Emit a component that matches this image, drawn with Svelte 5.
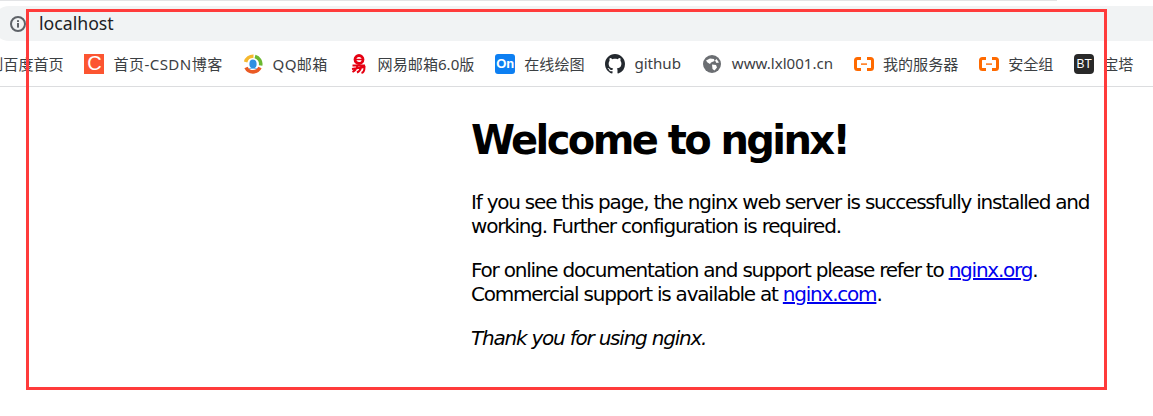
<script>
	const bookmarks = [
		{ id: 'baidu', label: '到百度首页' },
		{ id: 'csdn', label: '首页-CSDN博客' },
		{ id: 'qq', label: 'QQ邮箱' },
		{ id: 'netease', label: '网易邮箱6.0版' },
		{ id: 'on', label: '在线绘图' },
		{ id: 'github', label: 'github' },
		{ id: 'globe', label: 'www.lxl001.cn' },
		{ id: 'ali', label: '我的服务器' },
		{ id: 'ali', label: '安全组' },
		{ id: 'bt', label: '宝塔' }
	];
</script>

<div class="page">
	<div class="top-line"></div>
	<div class="address-bar">
		<svg class="info" viewBox="0 0 16 16" width="16" height="16">
			<circle cx="8" cy="8" r="7" fill="none" stroke="#5f6368" stroke-width="2" />
			<rect x="7" y="7" width="2" height="4.600" fill="#5f6368" />
			<rect x="7" y="4.200" width="2" height="1.800" fill="#5f6368" />
		</svg>
		<span class="url">localhost</span>
	</div>

	<div class="bookmarks">
		{#each bookmarks as b}
			<div class="bookmark" class:first={b.id === 'baidu'}>
				{#if b.id === 'csdn'}
					<span class="tile csdn">C</span>
				{:else if b.id === 'qq'}
					<svg viewBox="0 0 20 20" width="20" height="20">
						<path d="M2.600 8A7.800 7.800 0 0 1 10.500 2.200" fill="none" stroke="#f5b82e" stroke-width="3.600" />
						<path d="M12 2.400A7.800 7.800 0 0 1 17.600 11.500" fill="none" stroke="#6bb82f" stroke-width="3.600" />
						<path d="M17 13.500A7.800 7.800 0 0 1 3 13.500" fill="none" stroke="#ea5a24" stroke-width="3.600" />
						<ellipse cx="10" cy="10" rx="3.600" ry="4.400" fill="#2f8fe0" />
						<path d="M6 14.500h8" stroke="#7cc0f0" stroke-width="1" />
					</svg>
				{:else if b.id === 'netease'}
					<svg viewBox="0 0 20 20" width="20" height="20">
						<circle cx="10" cy="5.500" r="4" fill="none" stroke="#e60012" stroke-width="2.800" />
						<path d="M7 5.500h6" stroke="#e60012" stroke-width="1.400" />
						<path d="M3.500 11.500H16M3 15l12.500-2c0 3-1 5.500-3 6M8.500 11.500c-.5 3-2.500 5-5 6.500M12 13.500c-.5 2.500-2 4-4 5" fill="none" stroke="#e60012" stroke-width="2" />
					</svg>
				{:else if b.id === 'on'}
					<span class="tile on">On</span>
				{:else if b.id === 'github'}
					<svg viewBox="0 0 16 16" width="20" height="20">
						<path fill="#24292f" d="M8 0C3.580 0 0 3.580 0 8c0 3.540 2.290 6.530 5.470 7.590.4.070.55-.17.55-.38 0-.19-.01-.82-.01-1.490-2.010.37-2.530-.49-2.690-.94-.09-.23-.48-.94-.82-1.130-.28-.15-.68-.52-.01-.53.63-.01 1.080.58 1.230.82.720 1.210 1.870.87 2.330.66.070-.52.280-.87.510-1.070-1.780-.2-3.640-.89-3.640-3.950 0-.87.310-1.590.820-2.150-.08-.2-.36-1.020.08-2.120 0 0 .67-.21 2.200.82.640-.18 1.320-.27 2-.27s1.360.09 2 .27c1.530-1.040 2.200-.82 2.200-.82.440 1.100.160 1.920.080 2.120.510.560.820 1.270.820 2.150 0 3.070-1.870 3.750-3.650 3.950.290.250.540.730.540 1.480 0 1.070-.01 1.930-.01 2.200 0 .210.150.460.550.380A8.010 8.010 0 0 0 16 8c0-4.420-3.580-8-8-8z" />
					</svg>
				{:else if b.id === 'globe'}
					<svg class="globe" viewBox="0 0 18 18" width="18" height="18">
						<circle cx="9" cy="9" r="9" fill="#6b6e72" />
						<path fill="#fff" d="M3 5.500 7 3.500l4 .5 .5 2-3.500 1.500-1 1.500-2.500-1.500zM9 9.500l4 .5 1 2.500-2.500 3-2-1.500zM13.500 4l2.500 3.500-2.500.5-1.500-2.500z" />
					</svg>
				{:else if b.id === 'ali'}
					<svg viewBox="0 0 20 20" width="20" height="20">
						<path d="M7 4.500H3.500Q1.500 4.500 1.500 6.500v7q0 2 2 2H7M13 4.500h3.500q2 0 2 2v7q0 2-2 2H13" fill="none" stroke="#ff6a00" stroke-width="3" />
						<rect x="7" y="9.400" width="6" height="1.400" fill="#ff6a00" />
					</svg>
				{:else if b.id === 'bt'}
					<span class="tile bt">BT</span>
				{/if}
				<span class="label" class:wide={b.id === 'csdn' || b.id === 'qq'}>{b.label}</span>
			</div>
		{/each}
	</div>

	<main class="content">
		<h1>Welcome to nginx!</h1>
		<p>If you see this page, the nginx web server is successfully installed and working. Further configuration is required.</p>
		<p>For online documentation and support please refer to <a href="#org">nginx.org</a>.<br />Commercial support is available at <a href="#com">nginx.com</a>.</p>
		<p><em>Thank you for using nginx.</em></p>
	</main>

	<div class="annotation"></div>
</div>

<style>
	:global(body) {
		margin: 0;
		background: #fff;
	}

	.page {
		position: relative;
		width: 1153px;
		height: 416px;
		overflow: hidden;
		font-family: "Noto Sans", "Noto Sans CJK SC", sans-serif;
	}

	.top-line {
		height: 1px;
		width: 1057px;
		background: #e3e4e6;
	}

	.address-bar {
		display: flex;
		align-items: center;
		height: 35px;
		margin-top: 5px;
		margin-left: -8px;
		padding-left: 18px;
		background: #f1f3f4;
		border-radius: 18px 0 0 18px;
	}

	.url {
		margin-left: 13px;
		padding-bottom: 2px;
		font-size: 17.700px;
		color: #202124;
	}

	.bookmarks {
		display: flex;
		align-items: center;
		height: 45px;
		border-bottom: 1px solid #dcdddf;
		font-size: 15.100px;
		color: #3c4043;
		white-space: nowrap;
	}

	.bookmark {
		display: flex;
		align-items: center;
		gap: 9px;
		margin-left: 20.800px;
	}

	.bookmark.first {
		margin-left: -11.800px;
	}

	.label {
		padding-bottom: 2px;
	}

	.wide {
		letter-spacing: 0.400px;
	}

	.globe {
		margin-left: 1px;
		margin-right: 2px;
	}

	.tile {
		display: flex;
		align-items: center;
		justify-content: center;
		width: 20px;
		height: 20px;
		color: #fff;
		font-family: "Liberation Sans", sans-serif;
		font-weight: 700;
	}

	.csdn {
		background: #fc5531;
		font-size: 20px;
		font-weight: 400;
	}

	.on {
		background: #0d7ff2;
		border-radius: 3px;
		font-size: 13px;
	}

	.bt {
		background: #292929;
		border-radius: 4px;
		font-size: 12px;
		font-weight: 400;
	}

	.content {
		width: 640px;
		padding: 8px;
		margin-left: 463px;
		font-family: "DejaVu Sans", sans-serif;
		font-size: 20px;
		line-height: 24px;
		color: #000;
		letter-spacing: -1.220px;
	}

	h1 {
		margin: 21px 0 26px;
		font-size: 40px;
		line-height: 48px;
		font-weight: 700;
		letter-spacing: -2.600px;
	}

	p {
		margin: 20px 0;
	}

	a {
		color: #0000ee;
	}

	.annotation {
		position: absolute;
		left: 26px;
		top: 9px;
		width: 1081px;
		height: 381px;
		box-sizing: border-box;
		border: 3px solid #ff3b3b;
	}
</style>
